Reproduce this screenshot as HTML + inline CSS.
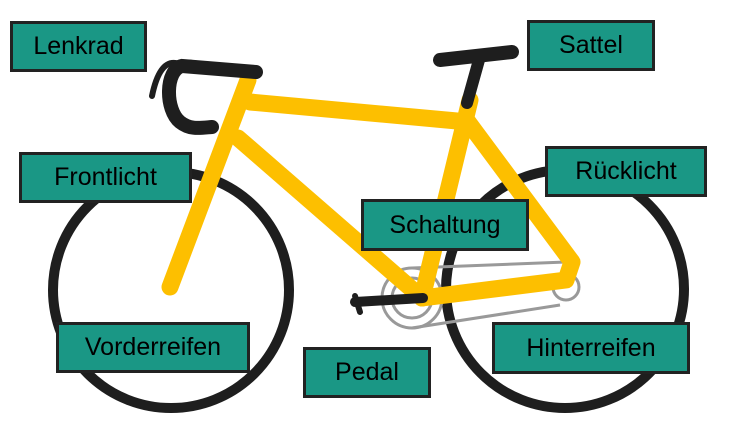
<!DOCTYPE html>
<html><head><style>
html,body{margin:0;padding:0;background:#fff;width:735px;height:439px;overflow:hidden;position:relative}
.l{position:absolute;background:#1a9785;border:3px solid #222;box-sizing:border-box;font-family:"Liberation Sans",sans-serif;font-size:25px;color:#000;display:flex;align-items:center;justify-content:center}
svg{position:absolute;left:0;top:0}
</style></head><body>
<svg width="735" height="439" viewBox="0 0 735 439">
<g fill="none" stroke="#1e1e1e" stroke-width="10">
<circle cx="171" cy="290" r="118"/>
<circle cx="565" cy="289" r="119"/>
</g>
<g fill="none" stroke="#999" stroke-width="3">
<circle cx="412" cy="298" r="30"/>
<circle cx="412" cy="298" r="20"/>
<circle cx="566" cy="287" r="13"/>
<line x1="412" y1="268" x2="566" y2="262"/>
<line x1="412" y1="328" x2="560" y2="305"/>
</g>
<g fill="none" stroke="#fdbf00" stroke-width="17" stroke-linecap="round" stroke-linejoin="round">
<line x1="248" y1="80" x2="170" y2="287"/>
<line x1="250" y1="102" x2="468" y2="122"/>
<line x1="238" y1="138" x2="422" y2="298"/>
<line x1="470" y1="100" x2="422" y2="298"/>
<polyline points="468,122 572,262 566,280 422,298"/>
</g>
<g fill="none" stroke="#1e1e1e" stroke-linecap="round">
<path d="M256,72 L175,63 C165,62 157,72 152,96" stroke-width="6"/>
<path d="M256,72 L182,66 C165,70 165,110 180,122 C190,130 200,128 212,127" stroke-width="14"/>
<path d="M256,73 L188,65" stroke-width="11"/>
<line x1="479" y1="60" x2="467" y2="103" stroke-width="12"/>
<line x1="440" y1="60" x2="512" y2="52" stroke-width="14"/>
<line x1="355" y1="302" x2="423" y2="298" stroke-width="10"/>
<line x1="355" y1="296" x2="360" y2="312" stroke-width="6"/>
</g>
</svg>
<div class="l" style="left:10px;top:21px;width:137px;height:51px">Lenkrad</div>
<div class="l" style="left:527px;top:20px;width:128px;height:51px">Sattel</div>
<div class="l" style="left:19px;top:152px;width:173px;height:51px">Frontlicht</div>
<div class="l" style="left:545px;top:146px;width:162px;height:51px">Rücklicht</div>
<div class="l" style="left:361px;top:199px;width:168px;height:52px">Schaltung</div>
<div class="l" style="left:56px;top:322px;width:194px;height:51px">Vorderreifen</div>
<div class="l" style="left:303px;top:347px;width:128px;height:51px">Pedal</div>
<div class="l" style="left:492px;top:322px;width:198px;height:52px">Hinterreifen</div>
</body></html>
